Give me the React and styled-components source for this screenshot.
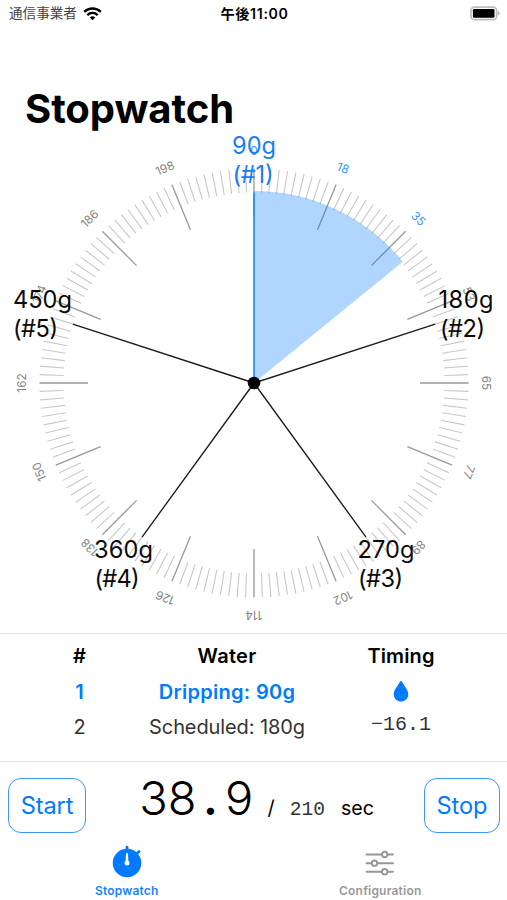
import React from 'react';
import styled, { createGlobalStyle, css } from 'styled-components';

const BLUE = '#007aff';
const GRAY = '#999999';

const GlobalStyle = createGlobalStyle`
  * { box-sizing: border-box; }
  body {
    margin: 0;
    background: #fff;
    color: #000;
    font-family: Inter, "Noto Sans CJK JP", sans-serif;
    overflow: hidden;
  }
`;

const Screen = styled.div`
  width: 507px;
  height: 900px;
  display: flex;
  flex-direction: column;
  overflow: hidden;
`;

const StatusBar = styled.header`
  height: 27px;
  padding: 0 7px 0 9px;
  display: grid;
  grid-template-columns: 1fr auto 1fr;
  align-items: center;
  font-size: 13.6px;
  line-height: 27px;
  flex: none;
`;

const Carrier = styled.div`
  display: flex;
  align-items: center;
  gap: 6px;
  color: #444;
  white-space: nowrap;
`;

const Clock = styled.div`
  font-weight: 600;
  font-size: 14.2px;
  letter-spacing: 0.65px;
`;

const BatterySlot = styled.div`
  display: flex;
  justify-content: flex-end;
`;

const Title = styled.h1`
  margin: 53px 0 0 25px;
  height: 56px;
  flex: none;
  font-size: 40px;
  line-height: 58px;
  font-weight: 700;
  letter-spacing: -0.05px;
`;

const Dial = styled.svg`
  display: block;
  flex: none;
  width: 507px;
  height: 497px;
  overflow: visible;
`;

const DialMark = styled.text`
  font-size: 11.8px;
  fill: ${p => (p.$active ? '#3b98fb' : '#858585')};
  text-anchor: middle;
`;

const PourLabel = styled.text`
  font-size: 23.6px;
  fill: ${p => (p.$active ? '#177ff5' : '#0a0a0a')};
`;

const Steps = styled.section`
  flex: none;
  height: 128px;
  border-top: 1px solid #e3e3e3;
  padding-top: 5px;
`;

const StepRow = styled.div`
  display: grid;
  grid-template-columns: 159px 136px 212px;
  grid-template-rows: 35.4px;
  height: 35.4px;
  line-height: 35px;
  text-align: center;
  font-size: 20px;
  font-weight: 400;
  color: #333;
  ${p => p.$head && css`color: #000; font-weight: 600;`}
  ${p => p.$active && css`color: ${BLUE}; font-weight: 600;`}
`;

const StepCell = styled.div`
  display: flex;
  align-items: center;
  justify-content: center;
  white-space: nowrap;
  letter-spacing: ${p => p.$tracking || 'normal'};
`;

const Remaining = styled.span`
  font-family: "Liberation Mono", monospace;
  font-size: 20px;
  line-height: 24px;
  letter-spacing: 0;
  padding-bottom: 4px;
`;

const Controls = styled.section`
  flex: none;
  height: 79px;
  border-top: 1px solid #e3e3e3;
  padding: 16px 7px 0 8px;
  display: flex;
  justify-content: space-between;
  align-items: flex-start;
`;

const ControlButton = styled.button`
  width: ${p => p.$width}px;
  height: 55px;
  padding: 0;
  border: 1.5px solid #3b95fa;
  border-radius: 13px;
  background: #fff;
  color: ${BLUE};
  font-family: inherit;
  font-size: 23.6px;
  letter-spacing: -0.1px;
`;

const Readout = styled.div`
  display: flex;
  align-items: baseline;
  height: 55px;
  margin-top: -1px;
  padding-left: 3px;
  line-height: 46px;
  white-space: pre;
`;

const Elapsed = styled.span`
  display: flex;
  font-size: 47px;
  font-weight: 300;
  line-height: 42px;
`;

const Digit = styled.span`
  width: 28.6px;
  text-align: center;
  font-weight: ${p => (p.$point ? 600 : 300)};
`;

const Slash = styled.span`
  font-size: 20px;
  margin-left: 14px;
`;

const Total = styled.span`
  font-family: "Liberation Mono", monospace;
  font-size: 19.6px;
  color: #333;
  margin-left: 15px;
`;

const Unit = styled.span`
  font-size: 19.6px;
  margin-left: 16px;
`;

const TabBar = styled.nav`
  flex: none;
  height: 60px;
  display: grid;
  grid-template-columns: 1fr 1fr;
`;

const Tab = styled.div`
  display: flex;
  flex-direction: column;
  align-items: center;
  padding-top: 5px;
  gap: 5px;
  color: ${p => (p.$active ? '#1684fb' : GRAY)};
  font-size: 12px;
  font-weight: 600;
  line-height: 16px;
  letter-spacing: 0.2px;
`;

const CX = 254;
const CY = 247;

const polar = (r, deg) => {
  const a = (deg * Math.PI) / 180;
  return [CX + r * Math.sin(a), CY - r * Math.cos(a)];
};

const Ray = ({ from, to, deg, ...rest }) => {
  const [x1, y1] = polar(from, deg);
  const [x2, y2] = polar(to, deg);
  return <line x1={x1} y1={y1} x2={x2} y2={y2} {...rest} />;
};

const MARKS = ['0', '18', '35', '53', '65', '77', '89', '102', '114', '126', '138', '150', '162', '174', '186', '198'];

const POURS = [
  { n: 1, grams: '90g', x: 232, y: 18, w: 44, x2: 232.5, w2: 41 },
  { n: 2, grams: '180g', x: 438.5, y: 172, w: 55, x2: 440, w2: 45 },
  { n: 3, grams: '270g', x: 357.5, y: 421.6, w: 57, x2: 358, w2: 45 },
  { n: 4, grams: '360g', x: 94, y: 421.6, w: 59, x2: 94.5, w2: 45 },
  { n: 5, grams: '450g', x: 13, y: 172, w: 59, x2: 13, w2: 45 },
];

const StopwatchDial = () => {
  const [sx, sy] = polar(192, 50.8);
  return (
    <Dial viewBox="0 0 507 497">
      {Array.from({ length: 160 }, (_, i) => (
        <Ray
          key={i}
          deg={i * 2.25}
          from={i % 10 === 0 ? 166 : 190.5}
          to={214.5}
          stroke={i % 10 === 0 ? '#999' : '#c8c8c8'}
          strokeWidth={i % 10 === 0 ? 1.3 : 1.1}
        />
      ))}
      {MARKS.map((m, i) => {
        const [x, y] = polar(232.5, i * 22.5);
        return (
          <DialMark key={m} $active={i < 3} x={x} y={y + 4.2} transform={`rotate(${i * 22.5} ${x} ${y})`}>
            {m}
          </DialMark>
        );
      })}
      <path d={`M${CX} ${CY}V${CY - 192}A192 192 0 0 1 ${sx} ${sy}Z`} fill={BLUE} fillOpacity="0.31" />
      {POURS.map((p, i) => (
        <Ray
          key={p.n}
          deg={i * 72}
          from={0}
          to={190.5}
          stroke={i === 0 ? '#2088f0' : '#1a1a1a'}
          strokeWidth={i === 0 ? 1.6 : 1.35}
        />
      ))}
      <circle cx={CX} cy={CY} r="6.3" fill="#000" />
      {POURS.map(p => (
        <g key={p.n}>
          <PourLabel $active={p.n === 1} x={p.x} y={p.y} textLength={p.w}>{p.grams}</PourLabel>
          <PourLabel $active={p.n === 1} x={p.x2} y={p.y + 29.2} textLength={p.w2}>{`(#${p.n})`}</PourLabel>
        </g>
      ))}
    </Dial>
  );
};

const WifiIcon = () => (
  <svg width="19" height="14" viewBox="0 0 19 14" fill="none" stroke="#000" strokeWidth="2.3">
    <path d="M1.2 4.9a11.8 11.8 0 0 1 16.6 0" />
    <path d="M4.3 8.1a7.4 7.4 0 0 1 10.4 0" />
    <path d="M9.5 13.3 6.8 10.6a3.9 3.9 0 0 1 5.4 0Z" fill="#000" stroke="none" />
  </svg>
);

const BatteryIcon = () => (
  <svg width="30" height="15" viewBox="0 0 31 15">
    <rect x="1" y="0.9" width="26.5" height="13" rx="3.6" fill="#fff" stroke="#bdbdbd" strokeWidth="1.8" />
    <rect x="3" y="2.9" width="22.3" height="9" rx="1.3" fill="#000" />
    <path d="M28.9 5v4.8q1.7-.8 1.7-2.4T28.9 5Z" fill="#b5b5b5" />
  </svg>
);

const DropIcon = () => (
  <svg width="16" height="22" viewBox="0 0 16 22">
    <path d="M8 -.6C7.200 -.6 6.800 .2 6.200 1.500C4.500 5 .7 8.500 .7 12.800A7.300 7.300 0 0 0 15.300 12.800C15.300 8.500 11.500 5 9.800 1.500C9.200 .2 8.800 -.6 8 -.6Z" fill={BLUE} transform="translate(0 .6)" />
  </svg>
);

const StopwatchIcon = () => (
  <svg width="30" height="33" viewBox="0 0 30 33">
    <circle cx="15" cy="18" r="14.300" fill={BLUE} />
    <path d="M15 4.500V2.200M25.300 8.300 27 6.600" stroke={BLUE} strokeWidth="2.800" strokeLinecap="round" />
    <path d="M14 8.300h2l.4 8.100h-2.800Z" fill="#fff" />
    <circle cx="15" cy="18" r="2.500" fill="#fff" />
  </svg>
);

const SlidersIcon = () => (
  <svg width="30" height="33" viewBox="0 0 30 33" stroke="#979797" strokeWidth="1.900" fill="#fff" strokeLinecap="round">
    <path d="M1.500 9.500H28M1.500 18.200H28M1.500 26.700H28" />
    <circle cx="19.700" cy="9.500" r="2.700" />
    <circle cx="9.500" cy="18.200" r="2.700" />
    <circle cx="19.700" cy="26.700" r="2.700" />
  </svg>
);

export default function App() {
  return (
    <Screen>
      <GlobalStyle />
      <StatusBar>
        <Carrier>通信事業者<WifiIcon /></Carrier>
        <Clock>午後11:00</Clock>
        <BatterySlot><BatteryIcon /></BatterySlot>
      </StatusBar>
      <Title>Stopwatch</Title>
      <StopwatchDial />
      <Steps>
        <StepRow $head>
          <StepCell>#</StepCell>
          <StepCell $tracking="0.3px">Water</StepCell>
          <StepCell $tracking="0.1px">Timing</StepCell>
        </StepRow>
        <StepRow $active>
          <StepCell>1</StepCell>
          <StepCell $tracking="0.3px">Dripping: 90g</StepCell>
          <StepCell><DropIcon /></StepCell>
        </StepRow>
        <StepRow>
          <StepCell>2</StepCell>
          <StepCell $tracking="-0.1px">Scheduled: 180g</StepCell>
          <StepCell><Remaining>−16.1</Remaining></StepCell>
        </StepRow>
      </Steps>
      <Controls>
        <ControlButton $width={78}>Start</ControlButton>
        <Readout>
          <Elapsed>{[...'38.9'].map((c, i) => <Digit key={i} $point={c === '.'}>{c}</Digit>)}</Elapsed>
          <Slash>/</Slash>
          <Total>210</Total>
          <Unit>sec</Unit>
        </Readout>
        <ControlButton $width={76}>Stop</ControlButton>
      </Controls>
      <TabBar>
        <Tab $active><StopwatchIcon />Stopwatch</Tab>
        <Tab><SlidersIcon />Configuration</Tab>
      </TabBar>
    </Screen>
  );
}
